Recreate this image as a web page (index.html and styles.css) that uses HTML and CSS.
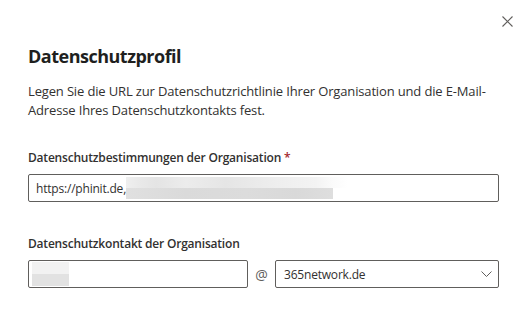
FILE: index.html
```html
<!DOCTYPE html>
<html lang="de">
  <head>
    <meta charset="UTF-8" />
    <meta name="viewport" content="width=device-width, initial-scale=1.0" />
    <title>Datenschutzprofil</title>
    <link rel="stylesheet" href="styles.css">
  </head>
  <body>
    <div class="panel">
      <div class="topbar">
        <button class="close-btn" title="Schließen">
          <svg width="11" height="11" viewBox="0 0 11 11">
            <path d="M0.5 0.5 L10.5 10.5 M10.5 0.5 L0.5 10.5" stroke="#605e5c" stroke-width="1.1" fill="none" />
          </svg>
        </button>
      </div>

      <h1 class="titel">Datenschutzprofil</h1>
      <p class="beschreibung">
        Legen Sie die URL zur Datenschutzrichtlinie Ihrer Organisation und die E-Mail-Adresse Ihres Datenschutzkontakts fest.
      </p>

      <div class="feld">
        <label class="feld-label">Datenschutzbestimmungen der Organisation <span class="pflicht">*</span></label>
        <div class="eingabe">
          <span class="eingabe-text">https://phinit.de,</span>
          <span class="verpixelt verpixelt-lang"></span>
        </div>
      </div>

      <div class="feld feld-kontakt">
        <label class="feld-label">Datenschutzkontakt der Organisation</label>
        <div class="kontakt-zeile">
          <div class="eingabe eingabe-name">
            <span class="verpixelt verpixelt-kurz"></span>
          </div>
          <span class="at">@</span>
          <div class="eingabe auswahl">
            <span class="eingabe-text">365network.de</span>
            <svg class="chevron" width="11" height="6" viewBox="0 0 11 6">
              <path d="M0.5 0.5 L5.5 5.5 L10.5 0.5" stroke="#605e5c" stroke-width="1" fill="none" />
            </svg>
          </div>
        </div>
      </div>
    </div>
  </body>
</html>
```

FILE: styles.css
```css
* {
  margin: 0;
  padding: 0;
  box-sizing: border-box;
}

body {
  background-color: white;
  font-family: "Segoe UI", "Open Sans", sans-serif;
  color: #323130;
  font-size: 14px;
}

.panel {
  width: 529px;
  height: 335px;
  padding: 0 30px 0 28px;
}

.topbar {
  display: flex;
  justify-content: flex-end;
  padding-top: 16px;
  margin-right: -14px;
  height: 42px;
}

.close-btn {
  background: none;
  border: none;
  width: 11px;
  height: 11px;
  cursor: pointer;
  display: flex;
}

.titel {
  font-size: 18px;
  font-weight: 700;
  letter-spacing: -0.5px;
  color: #201f1e;
  line-height: 28px;
}

.beschreibung {
  margin-top: 12px;
  line-height: 19px;
  font-size: 13px;
  letter-spacing: -0.15px;
}

.feld {
  margin-top: 28px;
}

.feld-kontakt {
  margin-top: 32px;
}

.feld-label {
  display: block;
  font-size: 12px;
  font-weight: 600;
  letter-spacing: -0.2px;
  line-height: 20px;
  margin-bottom: 6px;
}

.pflicht {
  color: #a4262c;
}

.eingabe {
  height: 28px;
  border: 1px solid #605e5c;
  border-radius: 2px;
  display: flex;
  align-items: center;
  padding: 0 7px;
  font-size: 12px;
  letter-spacing: -0.2px;
  color: #323130;
}

.verpixelt {
  display: inline-block;
  height: 22px;
}

.verpixelt-lang {
  width: 222px;
  background:
    linear-gradient(to right, #efefef 0, #e9e9e9 14px, #e4e4e4 30px, #ececec 60px, #e5e5e5 100px, #eeeeee 150px, #f3f3f3 190px, #fafafa 205px, transparent 222px) top / 100% 50% no-repeat,
    linear-gradient(to right, #e0e0e0 0, #dadada 60px, #dcdcdc 120px, #d9d9d9 170px, #dedede 207px, transparent 207px) bottom / 100% 50% no-repeat;
}

.verpixelt-kurz {
  width: 37px;
  margin-left: -4px;
  height: 24px;
  background:
    linear-gradient(#f2f2f2, #f2f2f2) top / 100% 50% no-repeat,
    linear-gradient(#e2e2e2, #e2e2e2) bottom / 100% 50% no-repeat;
}

.kontakt-zeile {
  display: flex;
  align-items: center;
}

.eingabe-name {
  width: 220px;
}

.at {
  width: 27px;
  text-align: center;
  font-size: 14px;
  color: #605e5c;
}

.auswahl {
  flex: 1;
  justify-content: space-between;
  padding-left: 8px;
  padding-right: 6px;
}
```
